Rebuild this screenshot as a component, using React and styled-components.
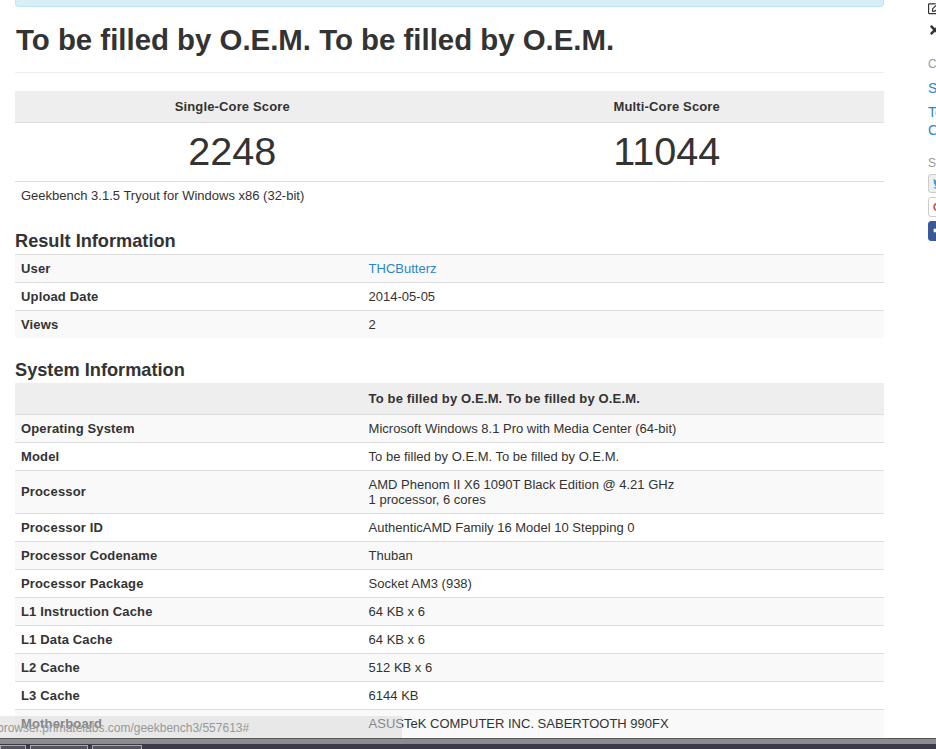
import React from 'react';
import styled, { createGlobalStyle } from 'styled-components';
import { FaRegEdit, FaTimes, FaTwitter, FaGooglePlusG, FaFacebookF } from 'react-icons/fa';

const GlobalStyle = createGlobalStyle`
  html, body {
    margin: 0;
    height: 100%;
    overflow: hidden;
    background: #fff;
  }
  body {
    font-family: "Liberation Sans", Arial, sans-serif;
    font-size: 13px;
    line-height: 15px;
    color: #333;
  }
`;

const Page = styled.div`
  position: relative;
  width: 936px;
  height: 749px;
  display: flex;
  flex-direction: column;
  overflow: hidden;
`;

const Content = styled.div`
  height: 738px;
  flex: none;
  display: flex;
  gap: 44px;
  padding-left: 15px;
  overflow: hidden;
`;

const Main = styled.main`
  width: 869px;
  flex: none;
`;

const Alert = styled.div`
  height: 6px;
  background: #d9edf7;
  border: 1px solid #bce8f1;
  border-top: 0;
  border-radius: 0 0 4px 4px;
`;

const Title = styled.h1`
  margin: 16px 0 0;
  font-size: 29.4px;
  line-height: 34px;
  font-weight: 700;
  padding: 0 0 15px 1px;
  border-bottom: 1px solid #eee;
`;

const Table = styled.table`
  width: 100%;
  table-layout: fixed;
  border-collapse: collapse;
  border-spacing: 0;
`;

const ScoreTable = styled(Table)`
  margin-top: 18px;
`;

const ScoreHead = styled.th`
  height: 31px;
  padding: 0;
  background: #eee;
  border-bottom: 1px solid #ddd;
  font-weight: 700;
  letter-spacing: 0.15px;
  text-align: center;
`;

const ScoreValue = styled.td`
  height: 58px;
  padding: 0 0 2px;
  box-sizing: border-box;
  border-bottom: 1px solid #ddd;
  font-size: 39.6px;
  line-height: 56px;
  text-align: center;
`;

const Version = styled.div`
  padding: 6px;
`;

const SectionTitle = styled.h3`
  margin: ${p => p.$top}px 0 0;
  font-size: 18.2px;
  line-height: 20px;
  font-weight: 700;
  padding-bottom: 3px;
`;

const Row = styled.tr`
  background: ${p => (p.$shade ? '#f9f9f9' : '#fff')};
`;

const Label = styled.td`
  box-sizing: border-box;
  width: 40%;
  padding: 6px;
  border-top: 1px solid #ddd;
  font-weight: 700;
  letter-spacing: 0.15px;
`;

const Value = styled.td`
  padding: 6px;
  border-top: 1px solid #ddd;
`;

const HeadCell = styled.th`
  box-sizing: border-box;
  width: ${p => p.$width || 'auto'};
  height: 31px;
  padding: 0 6px;
  background: #eee;
  border-bottom: 1px solid #ddd;
  font-weight: 700;
  letter-spacing: 0.15px;
  text-align: left;
`;

const UserLink = styled.a`
  color: #2a85cf;
  text-decoration: none;
`;

const Sidebar = styled.aside`
  width: 200px;
  flex: none;
  white-space: nowrap;
`;

const ToolIcon = styled.div`
  height: 14px;
  margin-top: ${p => p.$top}px;
  font-size: 14px;
  line-height: 14px;
  color: #333;
`;

const SideCaption = styled.div`
  margin-top: ${p => p.$top}px;
  color: #999;
  font-size: 12px;
  line-height: 14px;
`;

const SideLink = styled.a`
  display: block;
  margin-top: ${p => p.$top}px;
  color: #2a85cf;
  font-size: 14px;
  line-height: 18px;
`;

const ShareButton = styled.div`
  width: 40px;
  height: ${p => p.$height}px;
  margin-top: 4px;
  display: flex;
  align-items: center;
  padding-left: ${p => p.$pad}px;
  box-sizing: border-box;
  font-size: ${p => p.$size}px;
  border-radius: 3px;
  border: 1px solid ${p => p.$border};
  background: ${p => p.$bg};
  color: ${p => p.$color};
`;

const StatusBubble = styled.div`
  position: absolute;
  left: 0;
  top: 716px;
  width: 402px;
  height: 22px;
  overflow: hidden;
  background: rgba(215, 215, 215, 0.5);
  color: #999;
  font-size: 12px;
  line-height: 24px;
  white-space: nowrap;
  text-indent: -3px;
`;

const Taskbar = styled.footer`
  flex: none;
  height: 11px;
  box-sizing: border-box;
  border-top: 1px solid #555;
  background: linear-gradient(#8c8c8c 0, #8c8c8c 5px, #3c3a4a 5px, #3c3a4a 100%);
  display: flex;
  align-items: flex-end;
  gap: 4px;
`;

const TaskButton = styled.div`
  width: ${p => p.$width}px;
  height: 4px;
  box-sizing: border-box;
  border: 1px solid #a9a9b0;
  border-bottom: 0;
  background: #55535f;
`;

const resultRows = [
  ['User', <UserLink href="#">THCButterz</UserLink>],
  ['Upload Date', '2014-05-05'],
  ['Views', '2'],
];

const systemRows = [
  ['Operating System', 'Microsoft Windows 8.1 Pro with Media Center (64-bit)'],
  ['Model', 'To be filled by O.E.M. To be filled by O.E.M.'],
  ['Processor', <>AMD Phenom II X6 1090T Black Edition @ 4.21 GHz<br />1 processor, 6 cores</>],
  ['Processor ID', 'AuthenticAMD Family 16 Model 10 Stepping 0'],
  ['Processor Codename', 'Thuban'],
  ['Processor Package', 'Socket AM3 (938)'],
  ['L1 Instruction Cache', '64 KB x 6'],
  ['L1 Data Cache', '64 KB x 6'],
  ['L2 Cache', '512 KB x 6'],
  ['L3 Cache', '6144 KB'],
  ['Motherboard', 'ASUSTeK COMPUTER INC. SABERTOOTH 990FX'],
];

const InfoRows = ({ rows }) =>
  rows.map(([label, value], i) => (
    <Row key={label} $shade={i % 2 === 0}>
      <Label>{label}</Label>
      <Value>{value}</Value>
    </Row>
  ));

export default function App() {
  return (
    <Page>
      <GlobalStyle />
      <Content>
        <Main>
          <Alert />
          <Title>To be filled by O.E.M. To be filled by O.E.M.</Title>
          <ScoreTable>
            <thead>
              <tr>
                <ScoreHead>Single-Core Score</ScoreHead>
                <ScoreHead>Multi-Core Score</ScoreHead>
              </tr>
            </thead>
            <tbody>
              <tr>
                <ScoreValue>2248</ScoreValue>
                <ScoreValue>11044</ScoreValue>
              </tr>
            </tbody>
          </ScoreTable>
          <Version>Geekbench 3.1.5 Tryout for Windows x86 (32-bit)</Version>

          <SectionTitle $top={22}>Result Information</SectionTitle>
          <Table>
            <tbody>
              <InfoRows rows={resultRows} />
            </tbody>
          </Table>

          <SectionTitle $top={22}>System Information</SectionTitle>
          <Table>
            <thead>
              <tr>
                <HeadCell $width="40%" />
                <HeadCell>To be filled by O.E.M. To be filled by O.E.M.</HeadCell>
              </tr>
            </thead>
            <tbody>
              <InfoRows rows={systemRows} />
            </tbody>
          </Table>
        </Main>

        <Sidebar>
          <ToolIcon $top={1}><FaRegEdit /></ToolIcon>
          <ToolIcon $top={8}><FaTimes /></ToolIcon>
          <SideCaption $top={20}>Compare</SideCaption>
          <SideLink $top={8}>Set Baseline</SideLink>
          <SideLink $top={6}>Toggle</SideLink>
          <SideLink $top={0}>Compare</SideLink>
          <SideCaption $top={17}>Share</SideCaption>
          <ShareButton $height={19} $size={13} $pad={4} $border="#ccc" $bg="#eee" $color="#2a9fd6"><FaTwitter /></ShareButton>
          <ShareButton $height={20} $size={14} $pad={4} $border="#ccc" $bg="#fff" $color="#d8432f"><FaGooglePlusG /></ShareButton>
          <ShareButton $height={20} $size={20} $pad={0} $border="#3b5998" $bg="#3b5998" $color="#fff"><FaFacebookF /></ShareButton>
        </Sidebar>
      </Content>
      <StatusBubble>browser.primatelabs.com/geekbench3/557613#</StatusBubble>
      <Taskbar>
        <TaskButton $width={26} />
        <TaskButton $width={58} />
        <TaskButton $width={50} />
      </Taskbar>
    </Page>
  );
}
